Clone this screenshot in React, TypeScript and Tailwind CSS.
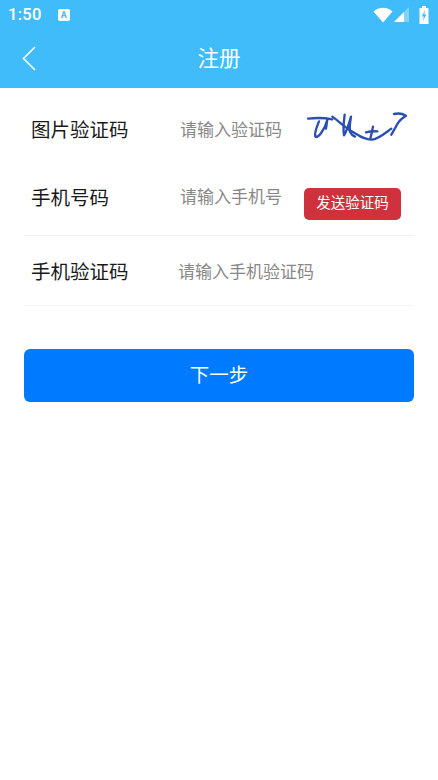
const cjk = 'font-["Roboto","Noto_Sans_CJK_SC",sans-serif]';

function StatusBar() {
  return (
    <div className="flex h-7 items-center pl-2 pr-[9px] text-white">
      <span className="mt-[3px] text-[16.5px] font-medium leading-none tracking-[0.3px]">1:50</span>
      <span className="ml-[16px] mt-[2px] flex h-3 w-3 items-center justify-center rounded-[2px] bg-white text-[9px] font-bold leading-none text-[#3fbcf9]">
        A
      </span>
      <div className="ml-auto mt-[1px] flex items-center">
        <svg width="20" height="16" viewBox="0 0 20 16" fill="white">
          <path d="M0.5 4.5C5.5 -0.5 14.5 -0.5 19.5 4.5L10 15.5Z" />
        </svg>
        <svg className="ml-[1px]" width="16" height="16" viewBox="0 0 16 16">
          <path d="M0 15L10 15L10 5Z" fill="white" />
          <path d="M10 15L15 15L15 0L10 5Z" fill="white" fillOpacity="0.35" />
        </svg>
        <svg className="ml-[9px]" width="10" height="18" viewBox="0 0 10 18">
          <path d="M3 0H7V2H9.5V18H0.5V2H3Z" fill="white" />
          <path d="M6 4L2.8 10.5H4.8L4 15L7.4 8.5H5.3Z" fill="#3fbcf9" />
        </svg>
      </div>
    </div>
  );
}

function Captcha() {
  return (
    <svg width="110" height="38" viewBox="0 0 330 114" fill="none" stroke="#2a4fb0" strokeWidth="7" strokeLinecap="round" strokeLinejoin="round">
      <path d="M12 32C35 29 60 29 85 34" />
      <path d="M45 40C38 58 30 76 34 86C42 92 62 66 70 35L66 62" />
      <path d="M85 26C105 40 125 62 150 74C170 86 185 96 205 95C225 92 245 74 262 62" />
      <path d="M122 20C120 40 116 62 120 82C128 70 136 44 141 26C138 44 136 60 138 72C142 80 148 84 153 86" />
      <path d="M207 56L199 92" />
      <path d="M186 73C197 70 208 69 220 70" />
      <path d="M270 18C282 15 296 17 306 23C295 30 285 38 280 48C274 60 268 70 262 80" />
    </svg>
  );
}

export default function App() {
  return (
    <div className={`${cjk} flex min-h-[780px] w-full flex-col bg-white`}>
      <div className="h-[88px] bg-[#3fbcf9]">
        <StatusBar />
        <div className="relative flex h-[60px] items-center justify-center">
          <svg className="absolute left-[21px] top-[17px]" width="16" height="26" viewBox="0 0 16 26" fill="none" stroke="white" strokeWidth="1.6">
            <path d="M14 2L2.5 13.5L14 25" />
          </svg>
          <span className="mt-[2px] text-[21.5px] leading-none text-white">注册</span>
        </div>
      </div>

      <div className="flex flex-col px-6 pt-[9px]">
        <div className="flex h-[68px] items-center">
          <span className="w-[156px] pl-[7px] text-[19.5px] leading-none text-[#1a1a1a]">图片验证码</span>
          <span className="-mt-[2px] text-[17px] leading-none text-[#888888]">请输入验证码</span>
          <div className="ml-[22px] -mt-[8px]">
            <Captcha />
          </div>
        </div>

        <div className="flex h-[71px] items-start border-b border-[#eeeeee]">
          <span className="mt-[22px] w-[156px] pl-[7px] text-[19.5px] leading-[24px] text-[#1a1a1a]">手机号码</span>
          <span className="mt-[21px] text-[17px] leading-[22px] text-[#888888]">请输入手机号</span>
          <button className="ml-[22px] mt-[23px] h-[32px] w-[97px] rounded-[5px] bg-[#d0323d] text-[14.5px] leading-none text-white">
            发送验证码
          </button>
        </div>

        <div className="flex h-[70px] items-center border-b border-[#f5f5f5] pt-[4px]">
          <span className="w-[154px] pl-[7px] text-[19.5px] leading-none text-[#1a1a1a]">手机验证码</span>
          <span className="text-[17px] leading-none text-[#888888]">请输入手机验证码</span>
        </div>

        <button className="mt-[43px] h-[53px] w-full rounded-[6px] bg-[#007aff] text-[19.5px] leading-none text-white">
          下一步
        </button>
      </div>
    </div>
  );
}
